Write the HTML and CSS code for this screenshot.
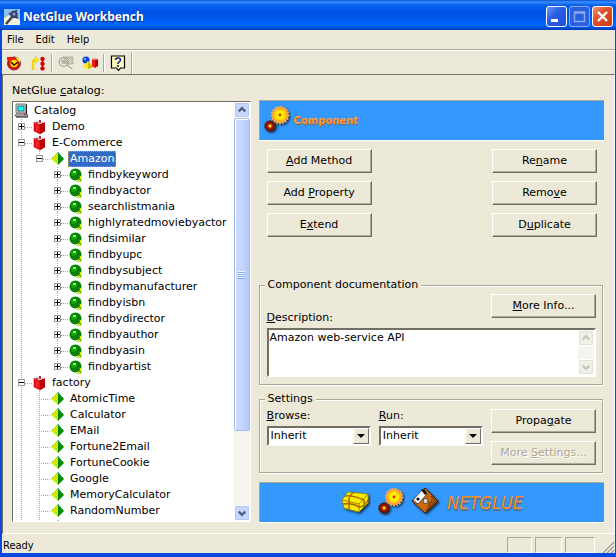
FILE: index.html
```html
<!DOCTYPE html>
<html lang="en">
<head>
<meta charset="utf-8">
<title>NetGlue Workbench</title>
<link rel="stylesheet" href="styles.css">
</head>
<body>
<svg class="defs" aria-hidden="true">
  <defs>
    <pattern id="dots" width="2" height="2" patternUnits="userSpaceOnUse">
      <rect width="2" height="2" fill="#8fdc10"/><rect width="1" height="1" fill="#ff0"/><rect x="1" y="1" width="1" height="1" fill="#ff0"/>
    </pattern>
    <pattern id="hatch" width="2" height="2" patternUnits="userSpaceOnUse">
      <rect width="1" height="1" fill="#aca899"/><rect x="1" y="1" width="1" height="1" fill="#aca899"/>
    </pattern>
    <radialGradient id="gold"><stop offset="0" stop-color="#ff0"/><stop offset=".7" stop-color="#ffe800"/><stop offset="1" stop-color="#ffb01a"/></radialGradient>
    <radialGradient id="rust"><stop offset="0" stop-color="#ff0"/><stop offset=".25" stop-color="#f50"/><stop offset=".5" stop-color="#a31a00"/><stop offset="1" stop-color="#4a1408"/></radialGradient>
    <filter id="drop" x="-20%" y="-20%" width="150%" height="150%"><feDropShadow dx="1.5" dy="1.5" stdDeviation="1" flood-opacity=".7"/></filter>
    <symbol id="i-computer" viewBox="0 0 16 16">
      <path d="M2 1h10v9H2z" fill="#c6c6c6" stroke="#777" stroke-width="1"/><path d="M4 3h6v5H4z" fill="#0ff" stroke="#333" stroke-width=".6"/>
      <path d="M12 1l1 1v9h-1z" fill="#222"/><path d="M2 11h11l1 2H1z" fill="#ddd" stroke="#444" stroke-width=".8"/><path d="M2 14h12" stroke="#111"/><path d="M10 11.5h2" stroke="#f00"/>
    </symbol>
    <symbol id="i-box" viewBox="0 0 16 16">
      <path d="M2 3l6 2v10l-6-3z" fill="#f01010"/><path d="M8 5l5-2v9l-5 3z" fill="#b40000"/><path d="M2 3l5-2 6 2-5 2z" fill="#ddd"/><path d="M7 1h2v3H7zM4 3h2v1H4z" fill="#a33"/><path d="M2 3v9l6 3 5-3" fill="none" stroke="#900" stroke-width=".5"/><path d="M5 7v5" stroke="#f66" stroke-width=".7"/>
    </symbol>
    <symbol id="i-pyramid" viewBox="0 0 16 16"><path d="M8 1v13L1 8z" fill="url(#dots)"/><path d="M8 1l6 7-6 6z" fill="#008a00"/><path d="M8 1L1 8" stroke="#9c3" stroke-width=".5"/></symbol>
    <symbol id="i-method" viewBox="0 0 16 16"><circle cx="7.5" cy="7.5" r="6" fill="#078207"/><path d="M3 5l3-2 3 2-1 3-4 1z" fill="#17a317"/><path d="M5 4h3v2H5z" fill="#9f6"/><path d="M13.500 9v6H9v-2l2-1 1-3z" fill="url(#dots)"/><path d="M10 10l3 4" stroke="#070"/></symbol>
    <symbol id="i-gears" viewBox="0 0 28 30">
      <g filter="url(#drop)"><circle cx="17" cy="11" r="8.2" fill="#ffa838"/><circle cx="17" cy="11" r="8.500" fill="none" stroke="#ffa850" stroke-width="1.300" stroke-dasharray="1.800 1.300"/><circle cx="17" cy="11" r="6.300" fill="url(#gold)"/><circle cx="17" cy="11" r="1.400" fill="#e02000"/>
      <circle cx="7" cy="22" r="5.300" fill="url(#rust)"/><circle cx="7" cy="22" r="5.400" fill="none" stroke="#58200c" stroke-width="1" stroke-dasharray="1.600 1.400"/><circle cx="7" cy="22" r="1.200" fill="#ff0"/></g>
    </symbol>
  </defs>
</svg>

<div class="window">
  <header class="titlebar">
    <svg class="app-icon" viewBox="0 0 16 16" aria-hidden="true"><path d="M0 0h16v16H0z" fill="#8cc0f4"/><path d="M0 9l6-3 10 5v5H0z" fill="#f4f0d8"/><path d="M2 15l7-8" stroke="#445" stroke-width="2.600"/><circle cx="10" cy="5.500" r="3.800" fill="#3b4478"/><path d="M9 4l4-3M11 8l3 1M7 6L5 4" stroke="#335" stroke-width="1.400"/><circle cx="10" cy="5" r="1.500" fill="#99b"/></svg>
    <h1 class="title">NetGlue Workbench</h1>
    <button class="caption" aria-label="Minimize"><svg viewBox="0 0 19 19"><path d="M4 12h7v3H4z" fill="#fff"/></svg></button>
    <button class="caption dim" aria-label="Maximize" disabled><svg viewBox="0 0 19 19"><path d="M4.500 5h10v9.500h-10zM4 6h11" fill="none" stroke="#8ba5f0" stroke-width="1.500"/></svg></button>
    <button class="caption close" aria-label="Close"><svg viewBox="0 0 19 19"><path d="M5 5l9 9M14 5l-9 9" stroke="#fff" stroke-width="2.400"/></svg></button>
  </header>
  <nav class="menubar"><button>File</button><button>Edit</button><button>Help</button></nav>
  <div class="toolbar">
    <button class="tool" aria-label="Refresh"><svg viewBox="0 0 16 16"><circle cx="8" cy="8.500" r="5" fill="#ffe600" stroke="#e01000" stroke-width="2.500"/><circle cx="8" cy="8.500" r="6.500" fill="none" stroke="#500" stroke-width=".8"/><path d="M5 7l3 3 4-3" fill="none" stroke="#300" stroke-width="1.500"/><path d="M1 2h6v3l-3 1-3-1z" fill="#f51c00"/><path d="M9 2l5 2v4z" fill="#ff0"/></svg></button>
    <button class="tool" aria-label="Run steps"><svg viewBox="0 0 16 16"><path d="M3 15V7q0-2 2-2h2" fill="none" stroke="#f0d800" stroke-width="2.500"/><path d="M5 1l4 4-4 3z" fill="#fe0" stroke="#c9b000" stroke-width=".4"/><path d="M12.500 3v11" stroke="#222"/><circle cx="12.500" cy="4" r="2.200" fill="#d00"/><circle cx="12.500" cy="8.700" r="2.200" fill="#d00"/><circle cx="12.500" cy="13.400" r="2.200" fill="#d00"/></svg></button>
    <span class="sep"></span>
    <button class="tool" aria-label="Find" disabled><svg viewBox="0 0 16 16"><path d="M5 2h10v7H9z" fill="url(#hatch)" stroke="#aca899" stroke-width=".7"/><circle cx="5.500" cy="7" r="4.300" fill="none" stroke="#aca899" stroke-width="1.300"/><path d="M3 6h5M4 8h4M9 10l5 4" stroke="#aca899" stroke-width="1.500"/><path d="M9 12l4 3" stroke="#fff"/></svg></button>
    <button class="tool" aria-label="Components"><svg viewBox="0 0 16 16"><circle cx="4" cy="5" r="3.600" fill="#0648e0"/><circle cx="3" cy="4" r="1" fill="#9cf"/><path d="M6 6l5 6-5 2-5-2z" fill="#fe0"/><path d="M6 6l5 6-5 2z" fill="#d3b600"/><path d="M10 4l3 1v8l-3-2z" fill="#f01818"/><path d="M13 5l3-1v7l-3 2z" fill="#b00000"/><path d="M10 4l3-1 3 1-3 1z" fill="#e88"/></svg></button>
    <span class="sep"></span>
    <button class="tool" aria-label="Help"><svg viewBox="0 0 16 16"><path d="M1.500 1h13v12h-4l-2 2.500-2-2.500h-5z" fill="#ffffb8" stroke="#000" stroke-width="1.200"/><path d="M5.500 5q0-2 2.500-2t2.500 2q0 1-2.500 3v1M8 10v2" fill="none" stroke="#1818a0" stroke-width="1.600"/></svg></button>
    <span class="sep end"></span>
  </div>

  <main class="client">
    <section class="catalog">
      <h2 class="caption-text" id="cat">NetGlue <u>c</u>atalog:</h2>
      <div class="tree-box">
        <div class="tree" aria-labelledby="cat">
          <div class="row"><svg class="icon"><use href="#i-computer"/></svg><span class="name">Catalog</span></div>
          <ul>
            <li><div class="row"><i class="box plus"></i><svg class="icon"><use href="#i-box"/></svg><span class="name">Demo</span></div></li>
            <li><div class="row"><i class="box"></i><svg class="icon"><use href="#i-box"/></svg><span class="name">E-Commerce</span></div>
              <ul>
                <li><div class="row"><i class="box"></i><svg class="icon"><use href="#i-pyramid"/></svg><span class="name selected">Amazon</span></div>
                  <ul>
                    <li><div class="row"><i class="box plus"></i><svg class="icon"><use href="#i-method"/></svg><span class="name">findbykeyword</span></div></li>
                    <li><div class="row"><i class="box plus"></i><svg class="icon"><use href="#i-method"/></svg><span class="name">findbyactor</span></div></li>
                    <li><div class="row"><i class="box plus"></i><svg class="icon"><use href="#i-method"/></svg><span class="name">searchlistmania</span></div></li>
                    <li><div class="row"><i class="box plus"></i><svg class="icon"><use href="#i-method"/></svg><span class="name">highlyratedmoviebyactor</span></div></li>
                    <li><div class="row"><i class="box plus"></i><svg class="icon"><use href="#i-method"/></svg><span class="name">findsimilar</span></div></li>
                    <li><div class="row"><i class="box plus"></i><svg class="icon"><use href="#i-method"/></svg><span class="name">findbyupc</span></div></li>
                    <li><div class="row"><i class="box plus"></i><svg class="icon"><use href="#i-method"/></svg><span class="name">findbysubject</span></div></li>
                    <li><div class="row"><i class="box plus"></i><svg class="icon"><use href="#i-method"/></svg><span class="name">findbymanufacturer</span></div></li>
                    <li><div class="row"><i class="box plus"></i><svg class="icon"><use href="#i-method"/></svg><span class="name">findbyisbn</span></div></li>
                    <li><div class="row"><i class="box plus"></i><svg class="icon"><use href="#i-method"/></svg><span class="name">findbydirector</span></div></li>
                    <li><div class="row"><i class="box plus"></i><svg class="icon"><use href="#i-method"/></svg><span class="name">findbyauthor</span></div></li>
                    <li><div class="row"><i class="box plus"></i><svg class="icon"><use href="#i-method"/></svg><span class="name">findbyasin</span></div></li>
                    <li><div class="row"><i class="box plus"></i><svg class="icon"><use href="#i-method"/></svg><span class="name">findbyartist</span></div></li>
                  </ul>
                </li>
              </ul>
            </li>
            <li class="open"><div class="row"><i class="box"></i><svg class="icon"><use href="#i-box"/></svg><span class="name">factory</span></div>
              <ul>
                <li><div class="row"><svg class="icon"><use href="#i-pyramid"/></svg><span class="name">AtomicTime</span></div></li>
                <li><div class="row"><svg class="icon"><use href="#i-pyramid"/></svg><span class="name">Calculator</span></div></li>
                <li><div class="row"><svg class="icon"><use href="#i-pyramid"/></svg><span class="name">EMail</span></div></li>
                <li><div class="row"><svg class="icon"><use href="#i-pyramid"/></svg><span class="name">Fortune2Email</span></div></li>
                <li><div class="row"><svg class="icon"><use href="#i-pyramid"/></svg><span class="name">FortuneCookie</span></div></li>
                <li><div class="row"><svg class="icon"><use href="#i-pyramid"/></svg><span class="name">Google</span></div></li>
                <li><div class="row"><svg class="icon"><use href="#i-pyramid"/></svg><span class="name">MemoryCalculator</span></div></li>
                <li><div class="row"><svg class="icon"><use href="#i-pyramid"/></svg><span class="name">RandomNumber</span></div></li>
                <li class="open"><div class="row"><svg class="icon"><use href="#i-pyramid"/></svg></div></li>
              </ul>
            </li>
          </ul>
        </div>
        <div class="scrollbar">
          <button class="arrow" aria-label="Scroll up"><svg viewBox="0 0 15 15"><path d="M4 9l3.500-3.500L11 9" fill="none" stroke="#4d6185" stroke-width="2.400"/></svg></button>
          <div class="track"><div class="thumb"><i></i></div></div>
          <button class="arrow" aria-label="Scroll down"><svg viewBox="0 0 15 15"><path d="M4 6l3.500 3.500L11 6" fill="none" stroke="#4d6185" stroke-width="2.400"/></svg></button>
        </div>
      </div>
    </section>

    <section class="details">
      <div class="banner">
        <svg class="gears" aria-hidden="true"><use href="#i-gears"/></svg>
        <h2 class="banner-title">Component</h2>
      </div>
      <div class="actions">
        <button class="btn"><span><u>A</u>dd Method</span></button><button class="btn"><span>Re<u>n</u>ame</span></button>
        <button class="btn"><span>Add <u>P</u>roperty</span></button><button class="btn"><span>Remo<u>v</u>e</span></button>
        <button class="btn"><span>E<u>x</u>tend</span></button><button class="btn"><span>D<u>u</u>plicate</span></button>
      </div>
      <fieldset class="group docs">
        <legend>Component documentation</legend>
        <div class="docs-head"><label for="desc"><u>D</u>escription:</label><button class="btn"><span><u>M</u>ore Info...</span></button></div>
        <div class="memo">
          <textarea id="desc">Amazon web-service API</textarea>
          <div class="scrollbar off">
            <button class="arrow" aria-label="Scroll up" disabled><svg viewBox="0 0 15 15"><path d="M4 9l3.500-3.500L11 9" fill="none" stroke="#c9c7ba" stroke-width="2.400"/></svg></button>
            <div class="track"></div>
            <button class="arrow" aria-label="Scroll down" disabled><svg viewBox="0 0 15 15"><path d="M4 6l3.500 3.500L11 6" fill="none" stroke="#c9c7ba" stroke-width="2.400"/></svg></button>
          </div>
        </div>
      </fieldset>
      <fieldset class="group settings">
        <legend>Settings</legend>
        <div class="settings-row">
          <div class="field"><label for="browse"><u>B</u>rowse:</label><div class="combo"><select id="browse"><option>Inherit</option></select><i class="drop"></i></div></div>
          <div class="field"><label for="run"><u>R</u>un:</label><div class="combo"><select id="run"><option>Inherit</option></select><i class="drop"></i></div></div>
          <div class="stack"><button class="btn"><span>Propa<u>g</u>ate</span></button><button class="btn" disabled><span>More <u>S</u>ettings...</span></button></div>
        </div>
      </fieldset>
      <footer class="banner brand">
        <svg class="logo" viewBox="0 0 30 30" aria-hidden="true"><g filter="url(#drop)"><path d="M1 14L7 6l20 2v9l-9 9-15-4z" fill="#f8ec00" stroke="#8a7a00" stroke-width=".7"/><path d="M1 14l17 4 9-10M18 18v8" fill="none" stroke="#8a6a00" stroke-width=".8"/><path d="M13 6q-6 4-5 10v7M4 10q8-1 19 4v7M2 18q10-1 16 3 5 0 9-7" fill="none" stroke="#a66000" stroke-width="1.400"/></g></svg>
        <svg class="gears" aria-hidden="true"><use href="#i-gears"/></svg>
        <svg class="logo" viewBox="0 0 30 30" aria-hidden="true"><g filter="url(#drop)"><path d="M1 15L14 2l13 13-13 12z" fill="#c96a10" stroke="#4a2000"/><path d="M2 14L11 4l5 4-9 10z" fill="#fff" stroke="#222" stroke-width=".7"/><path d="M10 4l3-1 3 4-2 2z" fill="#111"/><circle cx="7" cy="13" r="1.600" fill="#111"/><circle cx="14.500" cy="15" r="2.500" fill="#ddd" stroke="#333" stroke-width=".8"/><path d="M20 10l5 5-10 10" fill="none" stroke="#6b3000" stroke-width="1.200"/><path d="M17 17l4-4 3 3-8 8z" fill="#9a4c08"/></g></svg>
        <span class="wordmark">NETGLUE</span>
      </footer>
    </section>
  </main>

  <footer class="status">
    <span class="ready">Ready</span><span class="pane"></span><span class="pane mid"></span><span class="pane wide"></span>
    <svg class="grip" viewBox="0 0 12 14" aria-hidden="true"><path d="M1 14L12 3M5 14l7-7M9 14l3-3" stroke="#a7a491" stroke-width="1.500"/><path d="M0 13L11 2M4 13l7-7M8 13l3-3" stroke="#fff" stroke-width=".7"/></svg>
  </footer>
</div>
</body>
</html>
```

FILE: styles.css
```css
:root {
  --face: #ece9d8;
  --shade: #aca899;
  --dark: #716f64;
  --sky: #3399ff;
  --wide: "DejaVu Sans", sans-serif;
  --menu: "DejaVu Sans Condensed", "DejaVu Sans", sans-serif;
}
* { box-sizing: border-box; }
body { margin: 0; background: var(--face); font: 11px/14px var(--wide); color: #000; }
button, select, textarea { font: inherit; color: inherit; margin: 0; padding: 0; border: 0; border-radius: 0; background: none; }
h1, h2, ul { margin: 0; padding: 0; font-size: inherit; }
ul { list-style: none; }
u { text-underline-offset: 1px; }
.defs { position: absolute; width: 0; height: 0; }

.window { display: flex; flex-direction: column; height: 100vh; min-height: 540px; border: solid #0a48e0; border-width: 0 1px 4px 2px; }

.titlebar { display: flex; flex: none; align-items: center; gap: 2px; height: 30px; padding: 3px 3px 0 2px; margin: 0 -1px 0 -2px; background: linear-gradient(#0a50d8, #3a91ff 2px, #0860ee 5px, #0054e3 12px, #0058ee 18px, #0066ff 25px, #0050d8 28px, #0038b8); }
.app-icon { width: 16px; height: 16px; margin-left: 2px; }
.title { flex: 1; padding-left: 1px; color: #fff; font: bold 13px/18px "Noto Sans", "Open Sans", sans-serif; font-size: 12px; text-shadow: 1px 1px #0a2a80; }
.caption { width: 21px; height: 21px; border: 1px solid #fff; border-radius: 3px; background: linear-gradient(135deg, #6f98f5, #2a5ee4 40%, #1c4fd8); }
.caption svg { display: block; width: 19px; height: 19px; }
.caption.dim { border-color: #8aa8f0; background: #2860e2; }
.caption.close { background: linear-gradient(135deg, #f0987a, #e2502c 40%, #cc3c14); }

.menubar { display: flex; flex: none; height: 20px; padding-left: 5px; gap: 12px; font: 11px/18px var(--menu); border-bottom: 1px solid var(--shade); }
.toolbar { display: flex; flex: none; align-items: center; height: 24px; border-top: 1px solid #fff; }
.tool { width: 24px; height: 22px; padding: 3px 4px; }
.tool svg { display: block; width: 16px; height: 16px; }
.sep { width: 2px; height: 18px; margin: 0 1px; border-left: 1px solid var(--shade); border-right: 1px solid #fff; }
.sep.end { height: 22px; }

.client { display: flex; flex: 1; min-height: 0; gap: 8px; padding: 9px 10px 11px 9px; border: 1px solid var(--dark); border-right-color: #fff; border-bottom-color: #fff; }
.catalog { display: flex; flex: 239 1 0; flex-direction: column; min-width: 0; }
.caption-text { font-weight: normal; margin-bottom: 3px; }
.tree-box { display: flex; flex: 1 1 0; min-height: 0; background: #fff; border: 1px solid var(--dark); border-right-color: #fff; border-bottom-color: #fff; }
.tree { flex: 1; min-width: 0; overflow: hidden; padding: 1px 0 0 1px; }
.row { display: flex; align-items: center; height: 16px; white-space: nowrap; }
.icon { flex: none; width: 16px; height: 16px; margin-right: 2px; }
.name { padding: 0 2px; line-height: 16px; }
.selected { background: #316ac5; color: #fff; outline: 1px dotted #d0a040; outline-offset: -1px; }
.tree li { position: relative; padding-left: 18px; }
.tree li::before { content: ""; position: absolute; left: 7px; top: 0; bottom: 0; width: 1px; background: repeating-linear-gradient(#aaa 0 1px, #fff 1px 2px); }
.tree li:last-child:not(.open)::before { bottom: auto; height: 8px; }
.tree li::after { content: ""; position: absolute; left: 8px; top: 8px; width: 10px; height: 1px; background: repeating-linear-gradient(90deg, #fff 0 1px, #aaa 1px 2px); }
.box { position: absolute; z-index: 1; left: 4px; top: 4px; width: 7px; height: 7px; border: 1px solid #999; background: linear-gradient(#000, #000) center / 5px 1px no-repeat #fff; }
.box.plus { background: linear-gradient(#000, #000) center / 5px 1px no-repeat, linear-gradient(#000, #000) center / 1px 5px no-repeat #fff; }

.scrollbar { display: flex; flex: none; flex-direction: column; width: 16px; background: #f5f4ee; }
.arrow { flex: none; width: 16px; height: 16px; border: 1px solid #fff; border-radius: 2px; background: #c6d6fc; box-shadow: inset 0 0 0 1px #b4c8f6; }
.arrow svg { display: block; width: 14px; height: 14px; }
.track { flex: 1; min-height: 0; }
.thumb { display: flex; align-items: center; justify-content: center; height: 81%; border: 1px solid #a4bcf0; border-radius: 2px; background: linear-gradient(90deg, #cddcff, #c2d4fd 60%, #b2c8f6); box-shadow: inset 1px 1px #fff; }
.thumb i { width: 7px; height: 8px; background: repeating-linear-gradient(#eef4fe 0 1px, #8cacf0 1px 2px); }
.off .arrow { background: #f0efe8; box-shadow: inset 0 0 0 1px #e3e1d6; }

.details { display: flex; flex: 346 1 0; flex-direction: column; min-width: 0; padding-top: 16px; }
.banner { display: flex; flex: none; align-items: center; height: 40px; padding-left: 3px; background: var(--sky); border: solid var(--shade); border-width: 1px 0 0 1px; box-shadow: 0 1px #fff; }
.gears { flex: none; width: 28px; height: 30px; margin-bottom: 4px; }
.banner-title { margin-left: 3px; color: #ff9a3c; font-size: 10px; text-shadow: 1px 1px #85603c; }
.actions { display: grid; grid-template-columns: 105px 105px; justify-content: space-between; gap: 8px; padding: 9px 7px 0 8px; }
.btn { width: 105px; height: 24px; background: var(--face); border: 1px solid; border-color: #fff var(--dark) var(--dark) #fff; box-shadow: inset -1px -1px var(--shade); }
.btn:disabled { color: var(--shade); text-shadow: 1px 1px #fff; }
.group { min-width: 0; margin: 0 1px 0 0; padding: 0 6px 0 7px; border: 1px solid var(--shade); box-shadow: 1px 1px #fff, inset 1px 1px #fff; }
.group legend { margin-left: -2px; padding: 0 3px; background: var(--face); }
.docs { margin-top: auto; }
.docs-head { display: flex; justify-content: space-between; align-items: flex-end; padding: 2px 0 3px; }
.docs-head .btn { margin-bottom: 7px; }
.memo { display: flex; height: 49px; margin-bottom: 7px; background: #fff; border: 2px solid; border-color: var(--dark) #fff #fff var(--dark); }
.memo textarea { flex: 1; min-width: 0; padding: 1px; line-height: 14px; resize: none; outline: 0; overflow: hidden; }
.settings { margin-top: 7px; }
.settings-row { display: flex; gap: 8px; padding: 3px 0 7px; }
.field { display: flex; flex: 104 1 0; flex-direction: column; gap: 3px; min-width: 0; }
.combo { position: relative; height: 20px; border: 2px solid; border-color: var(--dark) #fff #fff var(--dark); background: #fff; }
.combo select { display: block; width: 100%; height: 16px; padding-left: 2px; appearance: none; outline: 0; }
.drop { position: absolute; right: 0; top: 0; width: 16px; height: 16px; pointer-events: none; background: var(--face); border: 1px solid; border-color: #fff var(--dark) var(--dark) #fff; }
.drop::after { content: ""; position: absolute; left: 3px; top: 5px; border: 4px solid transparent; border-top-color: #000; border-bottom: 0; }
.stack { display: flex; flex-direction: column; gap: 8px; }
.brand { justify-content: flex-end; gap: 6px; margin-top: 9px; padding-right: 81px; }
.logo { flex: none; width: 30px; height: 30px; margin-bottom: 4px; }
.wordmark { color: #ff8c1a; font: italic 18px/30px "DejaVu Sans Condensed", sans-serif; text-shadow: 1px 2px 1px #5a6a80; }

.status { display: flex; flex: none; align-items: flex-end; gap: 3px; height: 19px; font: 11px/15px var(--menu); }
.ready { flex: 1; padding-left: 1px; }
.pane { width: 25px; height: 16px; border: 1px solid; border-color: var(--shade) #fff #fff var(--shade); }
.mid { width: 27px; }
.wide { width: 30px; }
.grip { width: 12px; height: 14px; margin: 0 1px 0 4px; }
```
